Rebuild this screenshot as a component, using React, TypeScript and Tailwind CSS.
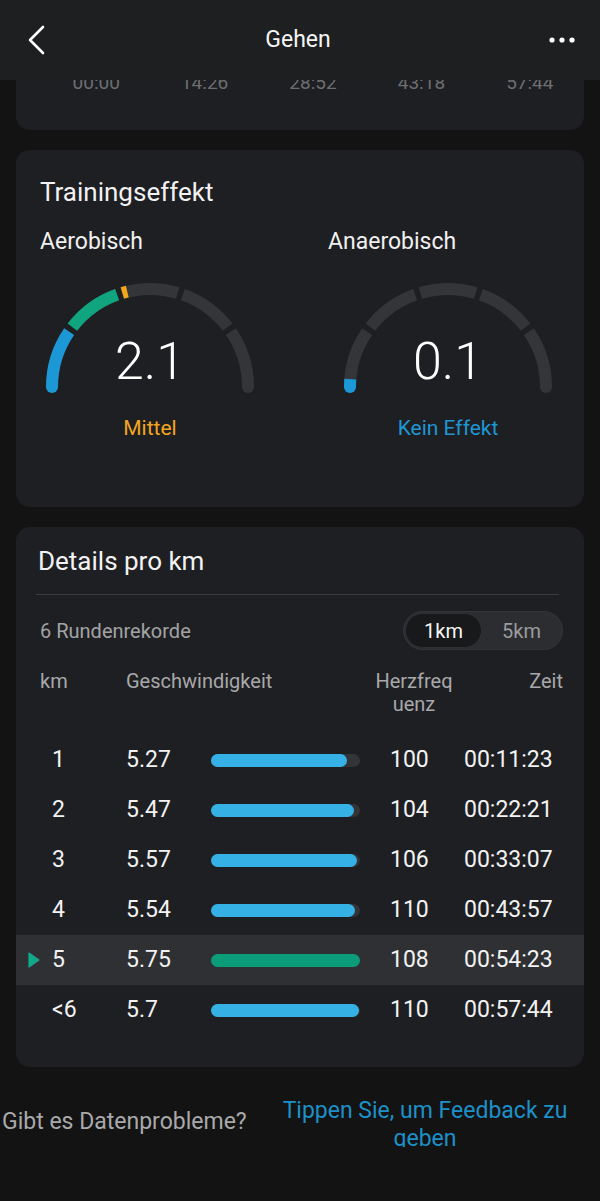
import React from "react";

const rows = [
  { km: "1", speed: "5.27", fill: 136, hr: "100", time: "00:11:23" },
  { km: "2", speed: "5.47", fill: 143, hr: "104", time: "00:22:21" },
  { km: "3", speed: "5.57", fill: 146, hr: "106", time: "00:33:07" },
  { km: "4", speed: "5.54", fill: 144, hr: "110", time: "00:43:57" },
  { km: "5", speed: "5.75", fill: 149, hr: "108", time: "00:54:23", active: true },
  { km: "<6", speed: "5.7", fill: 148, hr: "110", time: "00:57:44" },
];

const segColors = ["#1b98d5", "#10a47f", "#f3a51c", "#e4572e", "#c0392b"];

function pt(cx: number, cy: number, r: number, a: number) {
  const rad = (a * Math.PI) / 180;
  return [cx + r * Math.cos(rad), cy - r * Math.sin(rad)];
}

function arc(cx: number, cy: number, r: number, a1: number, a2: number) {
  const [x1, y1] = pt(cx, cy, r, a1);
  const [x2, y2] = pt(cx, cy, r, a2);
  return `M ${x1} ${y1} A ${r} ${r} 0 0 1 ${x2} ${y2}`;
}

function Gauge({ value }: { value: number }) {
  const cx = 115;
  const cy = 112;
  const r = 98;
  const g = 1.6;
  const segs = [0, 1, 2, 3, 4].map((i) => ({
    start: 180 - 36 * i - (i > 0 ? g : 0),
    end: 180 - 36 * (i + 1) + (i < 4 ? g : 0),
  }));
  const [lx, ly] = pt(cx, cy, r, 180);
  const [rx, ry] = pt(cx, cy, r, 0);

  return (
    <svg width="230" height="130" viewBox="0 0 230 130" className="block overflow-visible">
      {segs.map((s, i) => (
        <path key={"g" + i} d={arc(cx, cy, r, s.start, s.end)} stroke="#343538" strokeWidth="12" fill="none" />
      ))}
      <circle cx={rx} cy={ry} r="6" fill="#343538" />
      {segs.map((s, i) => {
        const f = Math.max(0, Math.min(1, value - i));
        if (f <= 0) return null;
        const end = f >= 1 ? s.end : 180 - 36 * (i + f) - 1;
        return <path key={"c" + i} d={arc(cx, cy, r, s.start, end)} stroke={segColors[i]} strokeWidth="12" fill="none" />;
      })}
      <circle cx={lx} cy={ly} r="6" fill={value > 0 ? segColors[0] : "#343538"} />
      <text x={cx} y="104" textAnchor="middle" fill="#ffffff" fontSize="52" fontWeight="300" fontFamily="Roboto, sans-serif">
        {value.toFixed(1)}
      </text>
    </svg>
  );
}

export default function App() {
  return (
    <div className="min-h-[1201px] bg-[#131313] font-['Roboto',sans-serif] text-white overflow-hidden">
      {/* top bar */}
      <div className="h-[80px] bg-[#1e1f21] flex items-center justify-between px-[26px] relative z-10">
        <svg width="22" height="30" viewBox="0 0 22 30">
          <path d="M17 2 L4 15 L17 28" stroke="#fff" strokeWidth="2.6" fill="none" strokeLinecap="round" strokeLinejoin="round" />
        </svg>
        <span className="text-[23px] leading-[28px] text-[#f5f5f5]">Gehen</span>
        <svg width="28" height="8" viewBox="0 0 28 8" className="mr-[-2px]">
          <circle cx="4" cy="4" r="2.6" fill="#fff" />
          <circle cx="14" cy="4" r="2.6" fill="#fff" />
          <circle cx="24" cy="4" r="2.6" fill="#fff" />
        </svg>
      </div>

      {/* scrolled chart card */}
      <div className="mx-4 h-[50px] overflow-hidden rounded-b-[14px] bg-[#1e1f22]">
        <div className="-mt-[9px] flex pl-[26px] text-[19px] leading-[24px] text-[#6d6e70]">
          {["00:00", "14:26", "28:52", "43:18", "57:44"].map((t) => (
            <span key={t} className="w-[110px] text-center">{t}</span>
          ))}
        </div>
      </div>

      {/* training effect */}
      <div className="mx-4 mt-[20px] h-[357px] rounded-[14px] bg-[#1e1f22] pl-[24px] pt-[27px]">
        <div className="text-[26px] leading-[30px] text-[#f2f2f2]">Trainingseffekt</div>
        <div className="mt-[21px] grid grid-cols-[288px_1fr]">
          <div>
            <div className="text-[23px] leading-[28px] text-[#f0f0f0]">Aerobisch</div>
            <div className="mt-[19px] -ml-[5px] w-[230px]">
              <Gauge value={2.1} />
              <div className="mt-[10px] text-center text-[21px] leading-[26px] text-[#f4a51f]">Mittel</div>
            </div>
          </div>
          <div>
            <div className="text-[23px] leading-[28px] text-[#f0f0f0]">Anaerobisch</div>
            <div className="mt-[19px] ml-[5px] w-[230px]">
              <Gauge value={0.1} />
              <div className="mt-[10px] text-center text-[21px] leading-[26px] text-[#1e96d2]">Kein Effekt</div>
            </div>
          </div>
        </div>
      </div>

      {/* details per km */}
      <div className="mx-4 mt-[20px] h-[540px] rounded-[14px] bg-[#1e1f22] pt-[19px]">
        <div className="pl-[22px] text-[26px] leading-[30px] text-[#f2f2f2]">Details pro km</div>
        <div className="ml-[20px] mr-[25px] mt-[18px] h-px bg-[#3a3b3e]" />

        <div className="mt-[16px] flex items-center justify-between pl-[24px] pr-[21px]">
          <span className="text-[20px] leading-[24px] text-[#a3a3a5]">6 Rundenrekorde</span>
          <div className="flex h-[39px] w-[160px] rounded-full border border-[#34353a] bg-[#2c2d30] p-[1px]">
            <div className="flex w-[77px] items-center justify-center rounded-full border border-[#2f3034] bg-[#18191b] text-[20px] text-[#f5f5f5]">
              1km
            </div>
            <div className="flex flex-1 items-center justify-center text-[20px] text-[#9a9b9e]">5km</div>
          </div>
        </div>

        <div className="mt-[20px] flex pl-[24px] pr-[21px] text-[20px] leading-[23px] text-[#a8a8aa]">
          <span className="w-[86px]">km</span>
          <span className="w-[247px]">Geschwindigkeit</span>
          <span className="w-[82px] break-all text-center">Herzfrequenz</span>
          <span className="flex-1 text-right">Zeit</span>
        </div>

        <div className="mt-[19px]">
          {rows.map((r) => (
            <div
              key={r.km}
              className={`flex h-[50px] items-center pl-[12px] text-[23px] text-[#f2f2f2] ${r.active ? "bg-[#2f3033]" : ""}`}
            >
              <span className="flex w-[24px] items-center">
                {r.active && (
                  <svg width="12" height="16" viewBox="0 0 12 16">
                    <path d="M1 1 L11 8 L1 15 Z" fill="#13a88a" stroke="#13a88a" strokeWidth="1.2" strokeLinejoin="round" />
                  </svg>
                )}
              </span>
              <span className="w-[74px]">{r.km}</span>
              <span className="w-[85px]">{r.speed}</span>
              <div className="h-[13px] w-[149px] rounded-full bg-[#333437]">
                <div
                  className={`h-full rounded-full ${r.active ? "bg-[#0b9d79]" : "bg-[#35b1e6]"}`}
                  style={{ width: r.fill }}
                />
              </div>
              <span className="ml-[30px] w-[74px]">{r.hr}</span>
              <span>{r.time}</span>
            </div>
          ))}
        </div>
      </div>

      {/* feedback */}
      <div className="mt-[30px] flex h-[50px] overflow-hidden">
        <div className="flex w-[275px] items-center pl-[2px] text-[23px] leading-[28px] text-[#a9a9ab]">
          Gibt es Datenprobleme?
        </div>
        <div className="w-[300px] text-center text-[23px] leading-[28px] text-[#1d90c9]">
          Tippen Sie, um Feedback zu geben
        </div>
      </div>
    </div>
  );
}
